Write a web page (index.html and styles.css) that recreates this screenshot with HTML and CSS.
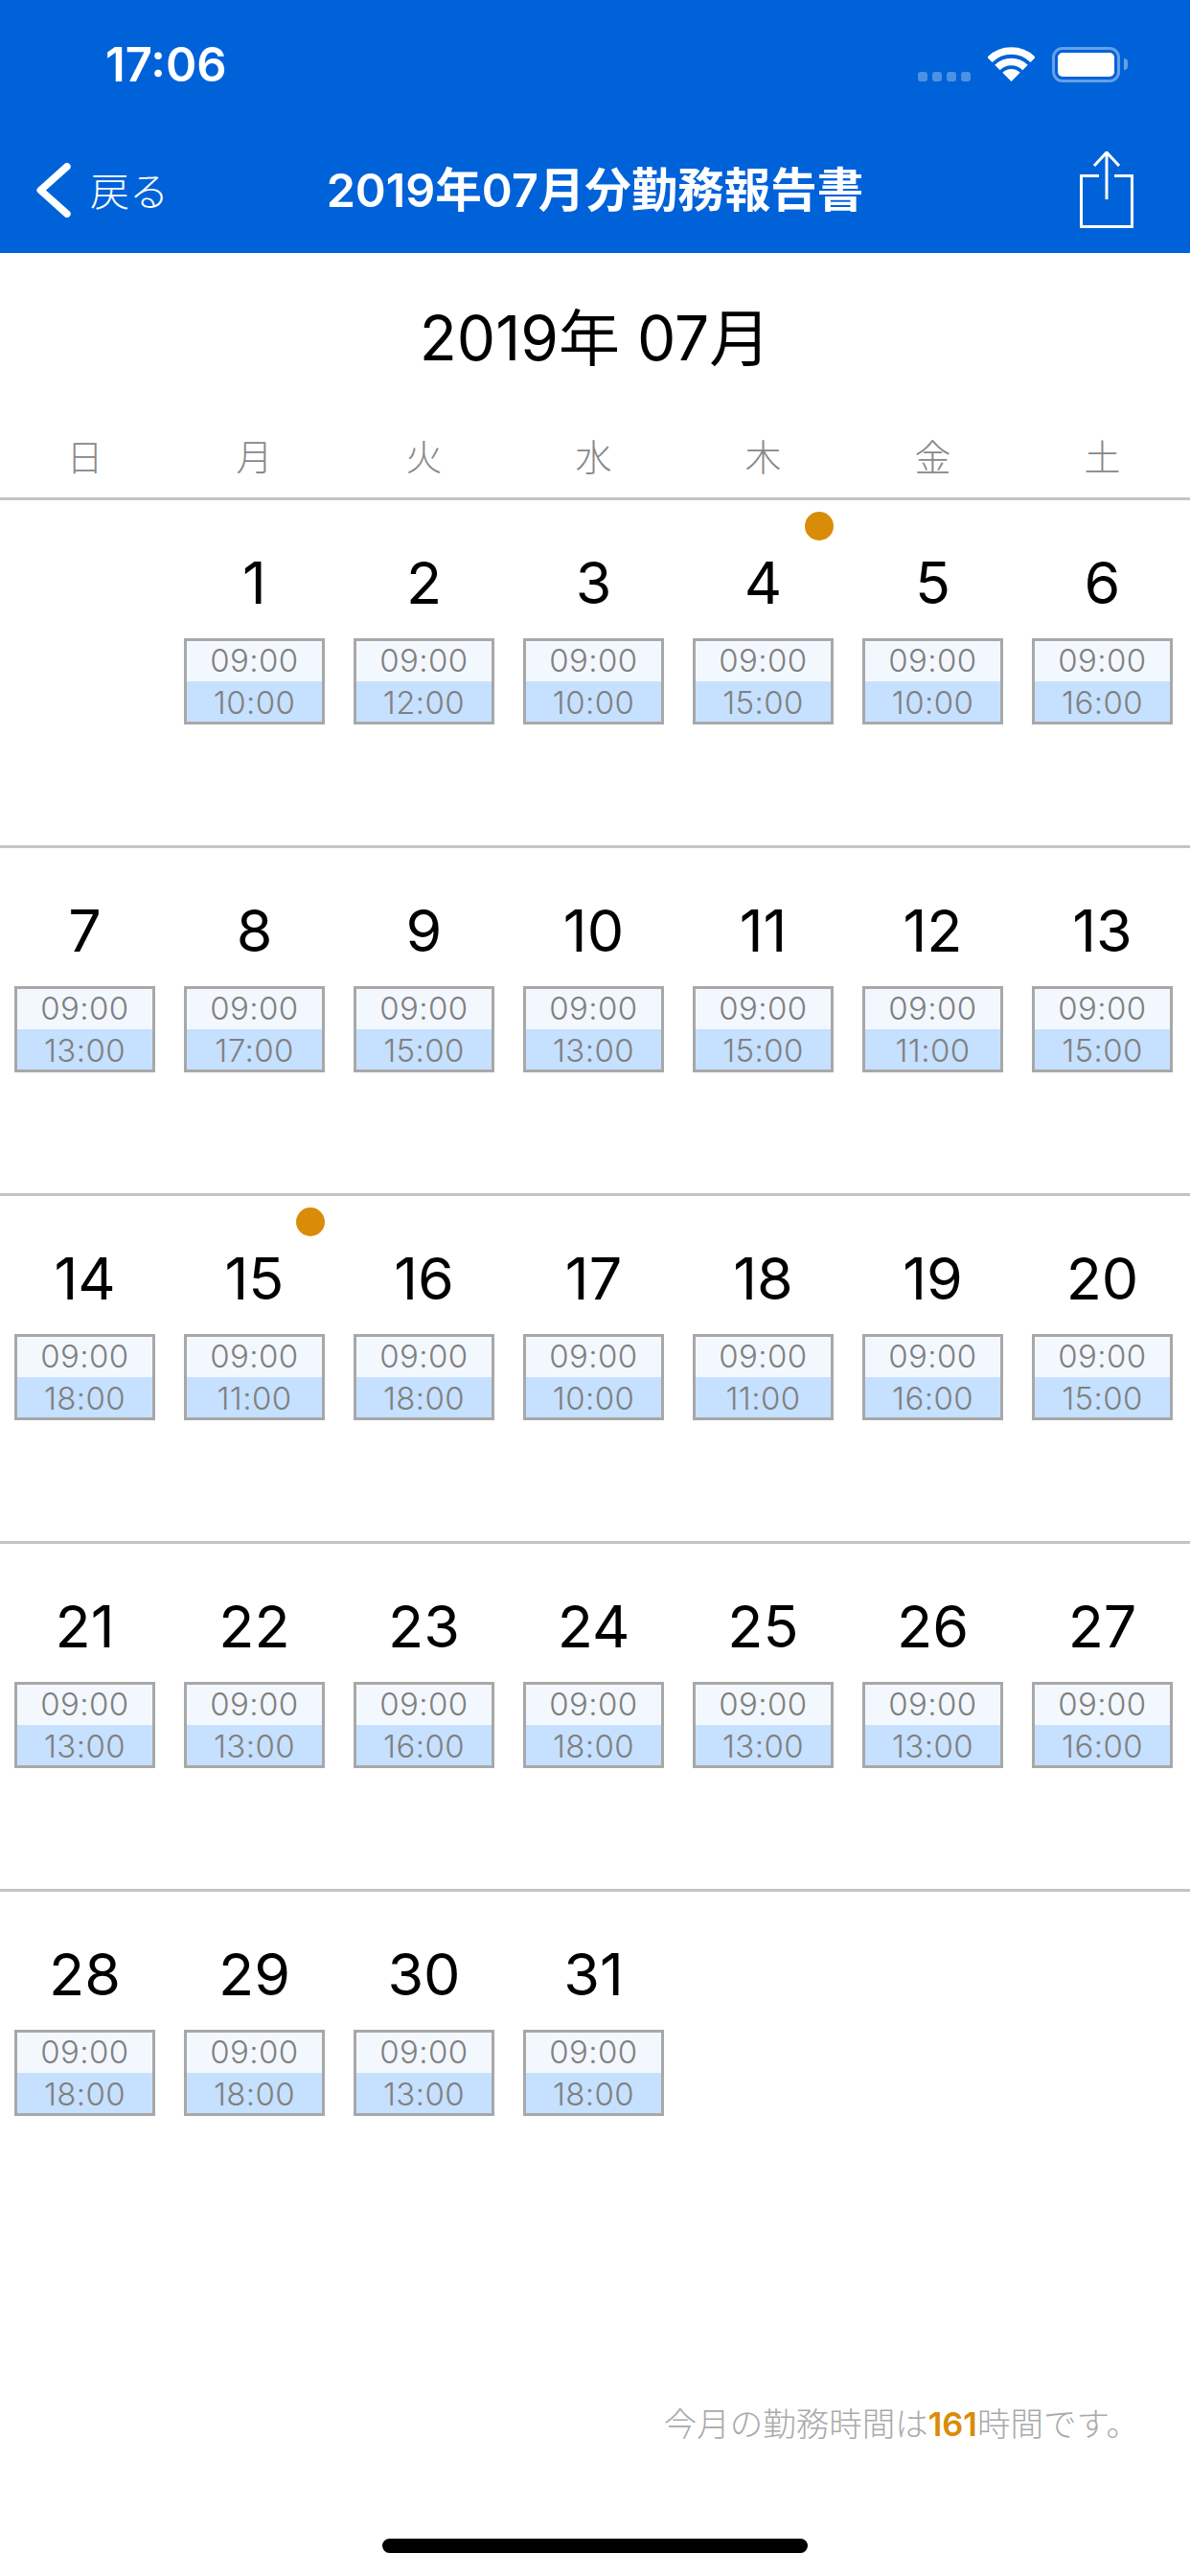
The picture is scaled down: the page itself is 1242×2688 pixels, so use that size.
FILE: index.html
```html
<!DOCTYPE html>
<html lang="ja">
<head>
<meta charset="utf-8">
<title>2019年07月分勤務報告書</title>
<link rel="stylesheet" href="styles.css">
</head>
<body>
<div class="page">
  <header class="header">
    <div class="status">
      <span class="clock">17:06</span>
      <div class="status-icons">
        <div class="signal"><i></i><i></i><i></i><i></i></div>
        <svg class="wifi" width="49" height="36" viewBox="0 0 49 36" fill="none" stroke="#fff" stroke-width="7.6">
          <path d="M1.9 13.4A32 32 0 0 1 47.1 13.4"/>
          <path d="M10 21.5A20.5 20.5 0 0 1 39 21.5"/>
          <path d="M15.3 26.8A13 13 0 0 1 33.7 26.8L24.5 36Z" fill="#fff" stroke="none"/>
        </svg>
        <div class="battery"><div class="battery-level"></div></div>
        <div class="battery-cap"></div>
      </div>
    </div>
    <nav class="nav">
      <div class="back">
        <svg class="chevron" width="40" height="60" viewBox="0 0 40 60" fill="none" stroke="#fff" stroke-width="8" stroke-linecap="round" stroke-linejoin="round">
          <path d="M33 4L4 30L33 56"/>
        </svg>
        <span class="back-label">戻る</span>
      </div>
      <h1 class="title">2019年07月分勤務報告書</h1>
      <svg class="share" width="56" height="80" viewBox="0 0 56 80" fill="none" stroke="#fff" stroke-width="3">
        <path d="M20 25.500H1.500V78.500H54.500V25.500H36"/>
        <path d="M28 1V50"/>
        <path d="M15 15L28 1L41 15"/>
      </svg>
    </nav>
  </header>

  <main class="calendar">
    <h2 class="month">2019年 07月</h2>
    <div class="weekdays">
      <span>日</span><span>月</span><span>火</span><span>水</span><span>木</span><span>金</span><span>土</span>
    </div>

    <section class="week">
      <div class="day"></div>
      <div class="day"><div class="num">1</div><div class="shift"><div class="in">09:00</div><div class="out">10:00</div></div></div>
      <div class="day"><div class="num">2</div><div class="shift"><div class="in">09:00</div><div class="out">12:00</div></div></div>
      <div class="day"><div class="num">3</div><div class="shift"><div class="in">09:00</div><div class="out">10:00</div></div></div>
      <div class="day"><span class="dot"></span><div class="num">4</div><div class="shift"><div class="in">09:00</div><div class="out">15:00</div></div></div>
      <div class="day"><div class="num">5</div><div class="shift"><div class="in">09:00</div><div class="out">10:00</div></div></div>
      <div class="day"><div class="num">6</div><div class="shift"><div class="in">09:00</div><div class="out">16:00</div></div></div>
    </section>
    <section class="week">
      <div class="day"><div class="num">7</div><div class="shift"><div class="in">09:00</div><div class="out">13:00</div></div></div>
      <div class="day"><div class="num">8</div><div class="shift"><div class="in">09:00</div><div class="out">17:00</div></div></div>
      <div class="day"><div class="num">9</div><div class="shift"><div class="in">09:00</div><div class="out">15:00</div></div></div>
      <div class="day"><div class="num">10</div><div class="shift"><div class="in">09:00</div><div class="out">13:00</div></div></div>
      <div class="day"><div class="num">11</div><div class="shift"><div class="in">09:00</div><div class="out">15:00</div></div></div>
      <div class="day"><div class="num">12</div><div class="shift"><div class="in">09:00</div><div class="out">11:00</div></div></div>
      <div class="day"><div class="num">13</div><div class="shift"><div class="in">09:00</div><div class="out">15:00</div></div></div>
    </section>
    <section class="week">
      <div class="day"><div class="num">14</div><div class="shift"><div class="in">09:00</div><div class="out">18:00</div></div></div>
      <div class="day"><span class="dot"></span><div class="num">15</div><div class="shift"><div class="in">09:00</div><div class="out">11:00</div></div></div>
      <div class="day"><div class="num">16</div><div class="shift"><div class="in">09:00</div><div class="out">18:00</div></div></div>
      <div class="day"><div class="num">17</div><div class="shift"><div class="in">09:00</div><div class="out">10:00</div></div></div>
      <div class="day"><div class="num">18</div><div class="shift"><div class="in">09:00</div><div class="out">11:00</div></div></div>
      <div class="day"><div class="num">19</div><div class="shift"><div class="in">09:00</div><div class="out">16:00</div></div></div>
      <div class="day"><div class="num">20</div><div class="shift"><div class="in">09:00</div><div class="out">15:00</div></div></div>
    </section>
    <section class="week">
      <div class="day"><div class="num">21</div><div class="shift"><div class="in">09:00</div><div class="out">13:00</div></div></div>
      <div class="day"><div class="num">22</div><div class="shift"><div class="in">09:00</div><div class="out">13:00</div></div></div>
      <div class="day"><div class="num">23</div><div class="shift"><div class="in">09:00</div><div class="out">16:00</div></div></div>
      <div class="day"><div class="num">24</div><div class="shift"><div class="in">09:00</div><div class="out">18:00</div></div></div>
      <div class="day"><div class="num">25</div><div class="shift"><div class="in">09:00</div><div class="out">13:00</div></div></div>
      <div class="day"><div class="num">26</div><div class="shift"><div class="in">09:00</div><div class="out">13:00</div></div></div>
      <div class="day"><div class="num">27</div><div class="shift"><div class="in">09:00</div><div class="out">16:00</div></div></div>
    </section>
    <section class="week">
      <div class="day"><div class="num">28</div><div class="shift"><div class="in">09:00</div><div class="out">18:00</div></div></div>
      <div class="day"><div class="num">29</div><div class="shift"><div class="in">09:00</div><div class="out">18:00</div></div></div>
      <div class="day"><div class="num">30</div><div class="shift"><div class="in">09:00</div><div class="out">13:00</div></div></div>
      <div class="day"><div class="num">31</div><div class="shift"><div class="in">09:00</div><div class="out">18:00</div></div></div>
    </section>
  </main>

  <footer class="footer">
    <p class="total">今月の勤務時間は<strong>161</strong>時間です。</p>
    <div class="home"></div>
  </footer>
</div>
</body>
</html>
```
FILE: styles.css
```css
* { box-sizing: border-box; margin: 0; padding: 0; }
html, body { background: #fff; }
body {
  width: 1242px;
  height: 2688px;
  overflow: hidden;
  font-family: "Inter", "Noto Sans CJK JP", sans-serif;
}
.page { display: flex; flex-direction: column; height: 2688px; }

.header { background: #0062d8; color: #fff; height: 264px; flex: none; }
.status {
  height: 132px;
  display: flex;
  justify-content: space-between;
  padding: 49px 65px 0 110px;
}
.clock { font-size: 49px; font-weight: 600; line-height: 37px; }
.status-icons { display: flex; align-items: flex-start; height: 37px; }
.signal { display: flex; gap: 5px; margin-top: 26px; margin-right: 18px; }
.signal i { width: 10px; height: 10px; border-radius: 3px; background: rgba(255,255,255,.3); display: block; }
.wifi { margin-right: 18px; }
.battery {
  width: 71px;
  height: 37px;
  border: 3px solid rgba(255,255,255,.4);
  border-radius: 11px;
  padding: 3px;
}
.battery-level { width: 100%; height: 100%; background: #fff; border-radius: 5px; }
.battery-cap {
  width: 4px;
  height: 12px;
  margin: 12px 0 0 4px;
  background: rgba(255,255,255,.4);
  border-radius: 0 4px 4px 0;
}

.nav {
  height: 132px;
  position: relative;
  display: flex;
  align-items: center;
  justify-content: space-between;
  padding: 0 59px 0 38px;
}
.back { display: flex; align-items: center; gap: 17px; }
.chevron { width: 39px; height: 57px; }
.back-label { font-size: 41px; font-weight: 300; line-height: 44px; margin-top: 4px; }
.title {
  position: absolute;
  left: 0;
  right: 0;
  top: 39px;
  text-align: center;
  font-size: 48.5px;
  font-weight: 600;
  line-height: 56px;
}

.month {
  font-size: 64px;
  font-weight: 400;
  text-align: center;
  color: #000;
  line-height: 72px;
  padding-top: 53px;
  height: 173px;
}
.weekdays {
  display: grid;
  grid-template-columns: repeat(7, 177px);
  text-align: center;
  color: #888;
  font-size: 38px;
  font-weight: 300;
  line-height: 50px;
  height: 82px;
  padding-top: 15px;
}
.week {
  display: grid;
  grid-template-columns: repeat(7, 177px);
  height: 363px;
  border-top: 3px solid #c4c4c4;
}
.day { position: relative; display: flex; flex-direction: column; align-items: center; }
.num {
  font-size: 61px;
  line-height: 68px;
  margin-top: 52px;
  color: #000;
}
.shift {
  width: 147px;
  height: 90px;
  margin-top: 24px;
  border: 3px solid #a8a8a8;
  color: #808080;
  font-size: 33px;
  font-weight: 300;
  text-align: center;
  letter-spacing: 0.4px;
}
.in, .out { height: 42px; }
.in { background: #f3f8ff; line-height: 40px; }
.out { background: #c6e0ff; line-height: 44px; }
.dot {
  position: absolute;
  top: 12px;
  right: 15px;
  width: 30px;
  height: 30px;
  border-radius: 50%;
  background: #d98c07;
}

.footer { flex: 1; position: relative; }
.total {
  text-align: right;
  color: #aaa;
  font-size: 34.5px;
  font-weight: 300;
  line-height: 40px;
  padding-right: 53px;
  margin-top: 176px;
}
.total strong { color: #d98c07; font-weight: 600; }
.home {
  position: absolute;
  left: 399px;
  top: 315px;
  width: 444px;
  height: 15px;
  border-radius: 8px;
  background: #000;
}
```
